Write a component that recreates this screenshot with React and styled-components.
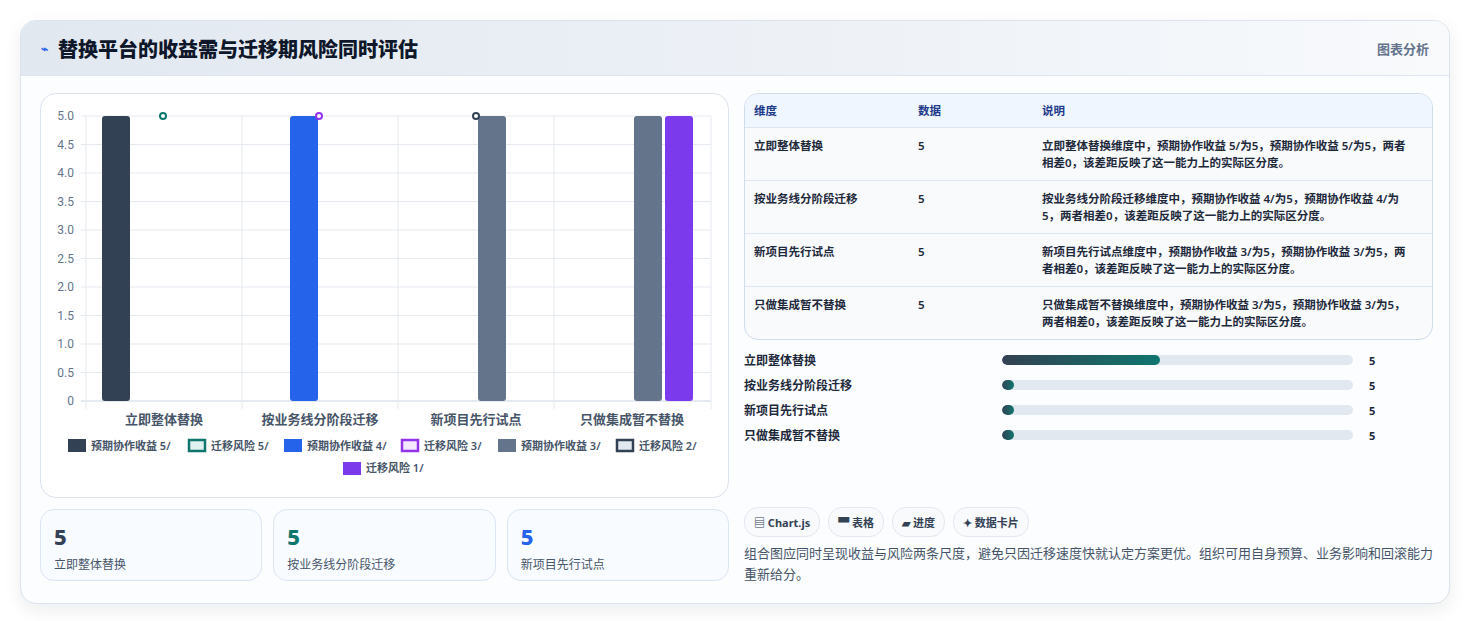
import React from "react";
import styled, { createGlobalStyle } from "styled-components";

const Global = createGlobalStyle`
  body { margin: 0; background: #fff; font-family: "Noto Sans", "Noto Sans CJK SC", sans-serif; }
`;
const Page = styled.div`padding: 20px 21px 21px 20px;`;
const Card = styled.div`
  border: 1px solid #dbe3ee; border-radius: 16px; overflow: hidden;
  background: #fbfdff; box-shadow: 0 6px 18px rgba(15,23,42,.08);
`;
const Header = styled.div`
  height: 54px; display: flex; align-items: center; justify-content: space-between;
  padding: 0 20px; background: linear-gradient(90deg,#e2e8f0,#eef2f7 60%,#f8fafc);
  border-bottom: 1px solid #dde6f0;
`;
const Title = styled.h1`
  margin: 0; font-size: 20px; font-weight: 800; color: #0f172a; display: flex; align-items: center; gap: 10px;
  span { color: #2563eb; font-size: 12px; }
`;
const Tag = styled.div`font-size: 13px; color: #64748b; font-weight: 600;`;
const Body = styled.div`display: grid; grid-template-columns: 689px 689px; gap: 15px; padding: 17px 18px 18px 19px;`;
const Col = styled.div`display: flex; flex-direction: column; gap: 11px;`;
const ChartBox = styled.div`border: 1px solid #dbe3ee; border-radius: 16px; background: #fff; height: 403px;`;
const Stats = styled.div`display: grid; grid-template-columns: repeat(3, 1fr); gap: 11px;`;
const Stat = styled.div`
  border: 1px solid #dbe5f3; border-radius: 14px; background: #f8fbff; height: 72px; padding: 13px 13px 0;
  box-sizing: border-box;
`;
const StatNum = styled.div`font-size: 22px; font-weight: 800; color: ${p => p.c}; line-height: 26px;`;
const StatLabel = styled.div`font-size: 12px; color: #475569; margin-top: 6px;`;
const Table = styled.div`border: 1px solid #cfdcec; border-radius: 14px; overflow: hidden; background: #f8fafc;`;
const Row = styled.div`
  display: grid; grid-template-columns: 164px 124px 1fr; padding: 0 18px 0 9px;
  font-size: 11.5px; font-weight: 600; color: ${p => p.head ? "#1e3a8a" : "#1e293b"};
  background: ${p => p.head ? "#eff6ff" : "transparent"}; min-height: ${p => p.head ? 33 : 53}px;
  align-items: ${p => p.head ? "center" : "start"}; padding-top: ${p => p.head ? 0 : 9}px;
  box-sizing: border-box; line-height: 17px;
  & + & { border-top: 1px solid #dde5ee; }
`;
const Bars = styled.div`display: flex; flex-direction: column; gap: 10px; margin-top: 11px;`;
const BarRow = styled.div`display: grid; grid-template-columns: 258px 359px 1fr; gap: 0; align-items: center; height: 15px; font-size: 12px; font-weight: 600; color: #1e293b;`;
const Track = styled.div`height: 10px; border-radius: 5px; background: #e2e8f0; overflow: hidden; margin-right: 8px;`;
const Fill = styled.div`height: 100%; border-radius: 5px; background: linear-gradient(90deg,#334155,#0f766e);`;
const Val = styled.span`padding-left: 8px; font-size: 11px; font-weight: 700;`;
const Chips = styled.div`display: flex; gap: 8px; margin-top: 66px;`;
const Chip = styled.div`
  height: 28px; padding: 0 9px; border: 1px solid #e2e8f0; border-radius: 14px; background: #f8fafc;
  display: flex; align-items: center; font-size: 11px; font-weight: 700; color: #334155;
`;
const Note = styled.p`margin: 6px 0 0; font-size: 13px; line-height: 21px; color: #475569;`;

const cats = ["立即整体替换", "按业务线分阶段迁移", "新项目先行试点", "只做集成暂不替换"];
const Y = v => 115 + (5 - v) * 57;

function Chart() {
  const ticks = ["5.0","4.5","4.0","3.5","3.0","2.5","2.0","1.5","1.0","0.5","0"];
  const items = [
    ["#334155","#334155","预期协作收益 5/",0,67],["#dff1ee","#0f766e","迁移风险 5/",1,187],["#2563eb","#2563eb","预期协作收益 4/",0,283],
    ["#f3e8ff","#9333ea","迁移风险 3/",1,400],["#64748b","#64748b","预期协作收益 3/",0,497],["#e2e8f0","#334155","迁移风险 2/",1,615],
  ].map(([f,s,t,b,cx]) => ({f,s,t,b,cx}));
  return (
    <svg width="688" height="403" viewBox="40 93 688 403" style={{display:"block"}}>
      {ticks.map((t,i) => (
        <g key={t}>
          <line x1="80" x2="710" y1={115+i*28.5} y2={115+i*28.5} stroke={i===10?"#cbd5e1":"#e5e9f0"} />
          <text x="73" y={119+i*28.5} textAnchor="end" fontSize="12" fill="#64748b" fontFamily="Roboto, sans-serif">{t}</text>
        </g>
      ))}
      {[85,241,397,553,710].map(v => <line key={v} x1={v} x2={v} y1="115" y2="408" stroke="#e5e9f0" />)}
      <rect x="101" y={Y(5)} width="28" height={285} rx="3" fill="#334155" />
      <rect x="289" y={Y(5)} width="28" height={285} rx="3" fill="#2563eb" />
      <rect x="477" y={Y(5)} width="28" height={285} rx="3" fill="#64748b" />
      <rect x="633" y={Y(5)} width="28" height={285} rx="3" fill="#64748b" />
      <rect x="664" y={Y(5)} width="28" height={285} rx="3" fill="#7c3aed" />
      <circle cx="162" cy="115" r="3" fill="#fff" stroke="#0f766e" strokeWidth="2" />
      <circle cx="318" cy="115" r="3" fill="#fff" stroke="#9333ea" strokeWidth="2" />
      <circle cx="475" cy="115" r="3" fill="#fff" stroke="#334155" strokeWidth="2" />
      {cats.map((c,i) => (
        <text key={c} x={163+i*156} y="423" textAnchor="middle" fontSize="13" fontWeight="600" fill="#475569">{c}</text>
      ))}
      {items.map(it => (
        <g key={it.t}>
          <rect x={it.cx+(it.b?1:0)} y={438+(it.b?1:0)} width={it.b?16:18} height={it.b?11:13} fill={it.f} stroke={it.b?it.s:"none"} strokeWidth={it.b?2.5:0} />
          <text x={it.cx+23} y="449" fontSize="11" fontWeight="600" fill="#475569">{it.t}</text>
        </g>
      ))}
      <rect x="342" y="461" width="18" height="13" fill="#7c3aed" />
      <text x="365" y="471" fontSize="11" fontWeight="600" fill="#475569">迁移风险 1/</text>
    </svg>
  );
}

const rows = [
  ["立即整体替换","5","立即整体替换维度中，预期协作收益 5/为5，预期协作收益 5/为5，两者相差0，该差距反映了这一能力上的实际区分度。"],
  ["按业务线分阶段迁移","5","按业务线分阶段迁移维度中，预期协作收益 4/为5，预期协作收益 4/为5，两者相差0，该差距反映了这一能力上的实际区分度。"],
  ["新项目先行试点","5","新项目先行试点维度中，预期协作收益 3/为5，预期协作收益 3/为5，两者相差0，该差距反映了这一能力上的实际区分度。"],
  ["只做集成暂不替换","5","只做集成暂不替换维度中，预期协作收益 3/为5，预期协作收益 3/为5，两者相差0，该差距反映了这一能力上的实际区分度。"],
];

export default function App() {
  return (
    <Page>
      <Global />
      <Card>
        <Header>
          <Title><span>⌁</span>替换平台的收益需与迁移期风险同时评估</Title>
          <Tag>图表分析</Tag>
        </Header>
        <Body>
          <Col>
            <ChartBox><Chart /></ChartBox>
            <Stats>
              <Stat><StatNum c="#334155">5</StatNum><StatLabel>立即整体替换</StatLabel></Stat>
              <Stat><StatNum c="#0f766e">5</StatNum><StatLabel>按业务线分阶段迁移</StatLabel></Stat>
              <Stat><StatNum c="#2563eb">5</StatNum><StatLabel>新项目先行试点</StatLabel></Stat>
            </Stats>
          </Col>
          <div>
            <Table>
              <Row head><span>维度</span><span>数据</span><span>说明</span></Row>
              {rows.map(r => <Row key={r[0]}><span>{r[0]}</span><span>{r[1]}</span><span>{r[2]}</span></Row>)}
            </Table>
            <Bars>
              {cats.map((c,i) => (
                <BarRow key={c}><span>{c}</span><Track><Fill style={{width: i===0 ? "45%" : "12px"}} /></Track><Val>5</Val></BarRow>
              ))}
            </Bars>
            <Chips>
              <Chip>▤ Chart.js</Chip><Chip>▀ 表格</Chip><Chip>▰ 进度</Chip><Chip>✦ 数据卡片</Chip>
            </Chips>
            <Note>组合图应同时呈现收益与风险两条尺度，避免只因迁移速度快就认定方案更优。组织可用自身预算、业务影响和回滚能力重新给分。</Note>
          </div>
        </Body>
      </Card>
    </Page>
  );
}
